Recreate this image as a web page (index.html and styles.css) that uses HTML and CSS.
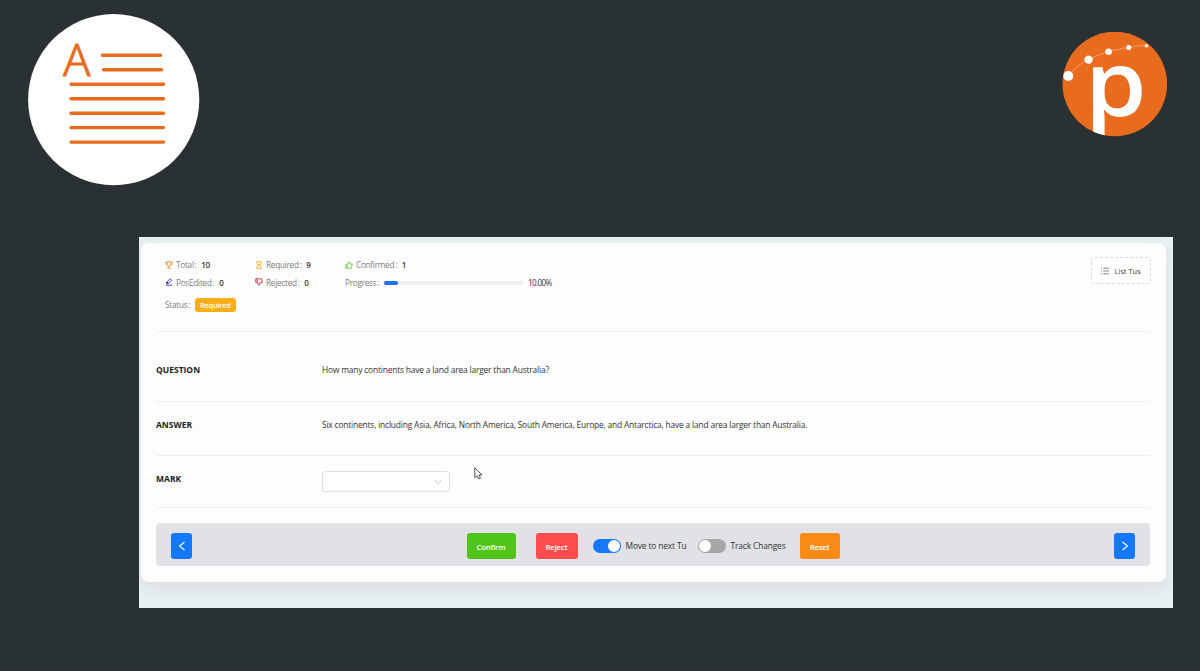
FILE: index.html
```html
<!DOCTYPE html>
<html lang="en">
<head>
    <meta charset="UTF-8">
    <title>Question Review</title>
    <link rel="stylesheet" href="styles.css">
</head>
<body>
    <!-- Top logos -->
    <header class="top">
        <svg class="doc-logo" width="172" height="172" viewBox="28 14 172 172">
            <circle cx="113.7" cy="99.6" r="85.6" fill="#fff"/>
            <text x="63.3" y="76.3" class="doc-letter">A</text>
            <g stroke="#e96c1e" stroke-width="3.4" stroke-linecap="round">
                <path d="M102.5 55.2H160.5M103.5 69.8H161.5M71 84.2H163.5M71 98.7H163.5M71 113.2H163.5M71 127.6H163.5M71 142.1H163.5"/>
            </g>
        </svg>
        <svg class="p-logo" width="106" height="105" viewBox="1062 32 106 105">
            <clipPath id="disc"><circle cx="1114.8" cy="84" r="52.3"/></clipPath>
            <circle cx="1114.8" cy="84" r="52.3" fill="#e96c1e"/>
            <g clip-path="url(#disc)">
                <text transform="translate(1085 116) scale(1.1 1)" class="p-letter">p</text>
            </g>
            <path d="M1068.3 76Q1077 65 1088.5 59.5T1108.5 51.6T1128.7 47.3T1146.5 45.7" fill="none" stroke="#f7b58c" stroke-width=".7"/>
            <g fill="#fff">
                <circle cx="1068.3" cy="76" r="5"/>
                <circle cx="1088.6" cy="59.6" r="4.2"/>
                <circle cx="1108.6" cy="51.7" r="3.3"/>
                <circle cx="1128.8" cy="47.4" r="2.5"/>
                <circle cx="1146.5" cy="45.8" r="1.8"/>
            </g>
        </svg>
    </header>

    <main class="screen">
        <div class="card">
            <!-- Summary -->
            <section class="summary">
                <div class="stats">
                    <div class="stat">
                        <svg class="icon orange" viewBox="0 0 16 16"><path d="M4 1.500h8v5a4 4 0 0 1-8 0zM4 3H1.500v2A2.500 2.500 0 0 0 4 7.500M12 3h2.500v2A2.500 2.500 0 0 1 12 7.500M8 10.500v3.500M4.500 14.500h7"/></svg>
                        <span class="name">Total<i>:</i></span><b>10</b>
                    </div>
                    <div class="stat">
                        <svg class="icon yellow" viewBox="0 0 16 16"><path d="M2.500 1.500h11M2.500 14.500h11M4 1.500v3a4 3.500 0 0 0 8 0v-3M4 14.500v-3a4 3.500 0 0 1 8 0v3"/></svg>
                        <span class="name">Required<i>:</i></span><b>9</b>
                    </div>
                    <div class="stat">
                        <svg class="icon green" viewBox="0 0 16 16"><path d="M1.500 7h3v7.500h-3zM4.500 7L7.500 1.500Q10 1.500 9.500 6H14.500L13 14.500H4.500"/></svg>
                        <span class="name">Confirmed<i>:</i></span><b>1</b>
                    </div>
                    <div class="stat">
                        <svg class="icon blue" viewBox="0 0 16 16"><path d="M1.500 14.500h13M3 11.500l.8-3.500L10.500 1.500l3 3L6.500 11z"/><path d="M3 11.500l.8-3.500 3 3z" fill="currentColor"/></svg>
                        <span class="name">PosEdited<i>:</i></span><b>0</b>
                    </div>
                    <div class="stat">
                        <svg class="icon red" viewBox="0 0 16 16"><path d="M1.500 1.500h3V9h-3zM4.500 1.500H13L14.500 9.500h-5Q10 14.500 7.500 14.500L4.500 9"/></svg>
                        <span class="name">Rejected<i>:</i></span><b>0</b>
                    </div>
                    <div class="stat">
                        <span class="name">Progress<i>:</i></span>
                        <span class="bar"><span class="bar-fill"></span></span>
                        <span class="percent">10.00%</span>
                    </div>
                    <div class="stat">
                        <span class="name">Status<i>:</i></span><span class="tag">Required</span>
                    </div>
                </div>
                <button class="list-button">
                    <svg width="8" height="8" viewBox="0 0 8 8"><path d="M2.300 1.200H8M2.300 4H8M2.300 6.800H8M0 1.200h1M0 4h1M0 6.800h1" stroke="#666" stroke-width=".8"/></svg>
                    <span>List Tus</span>
                </button>
            </section>

            <!-- Question and answer -->
            <section class="row question">
                <h2>QUESTION</h2>
                <p>How many continents have a land area larger than Australia?</p>
            </section>
            <section class="row answer">
                <h2>ANSWER</h2>
                <p>Six continents, including Asia, Africa, North America, South America, Europe, and Antarctica, have a land area larger than Australia.</p>
            </section>
            <section class="row mark">
                <h2>MARK</h2>
                <div class="select">
                    <svg width="8" height="6" viewBox="0 0 8 6"><path d="M.8 .8L4 4.800L7.200 .8" fill="none" stroke="#c4c4c4" stroke-width=".9"/></svg>
                </div>
            </section>

            <!-- Actions -->
            <section class="toolbar">
                <button class="btn nav"><svg width="8" height="10" viewBox="0 0 8 10"><path d="M6.500 1L1.500 5l5 4" fill="none" stroke="#fff" stroke-width="1.100"/></svg></button>
                <div class="actions">
                    <button class="btn confirm">Confirm</button>
                    <button class="btn reject">Reject</button>
                    <span class="switch on"></span>
                    <span class="switch-label next">Move to next Tu</span>
                    <span class="switch"></span>
                    <span class="switch-label track">Track Changes</span>
                    <button class="btn reset">Reset</button>
                </div>
                <button class="btn nav"><svg width="8" height="10" viewBox="0 0 8 10"><path d="M1.500 1l5 4-5 4" fill="none" stroke="#fff" stroke-width="1.100"/></svg></button>
            </section>
        </div>
    </main>

    <svg class="cursor" width="9" height="13" viewBox="0 0 9 13"><path d="M.8 .8V10.600L3.200 8.600L4.800 12L6.500 11.200L5 8H8z" fill="#fff" stroke="#444" stroke-width=".9"/></svg>
</body>
</html>
```

FILE: styles.css
```css
* {
    box-sizing: border-box;
}

body {
    margin: 0;
    height: 671px;
    overflow: hidden;
    background-color: #293133;
    font-family: "Open Sans", "Noto Sans", sans-serif;
    font-size: 8.4px;
    color: #333;
}

/* Top logos */
.top {
    display: flex;
    justify-content: space-between;
    height: 237px;
    padding: 14px 32px 0 28px;
}

.p-logo {
    margin-top: 18px;
}

.doc-letter {
    font-size: 45px;
    font-weight: 300;
    fill: #e96c1e;
    stroke: #e96c1e;
    stroke-width: 1.1px;
}

.p-letter {
    font-size: 90px;
    font-weight: 600;
    fill: #fff;
}

/* Application window */
.screen {
    width: 1034px;
    height: 371px;
    margin-left: 139px;
    padding: 6px 7px 0 2px;
    background-color: #e9f0f3;
    overflow: hidden;
}

.card {
    height: 339px;
    padding: 0 16px 0 15px;
    background-color: #fdfdfd;
    border-radius: 8px;
    box-shadow: 0 7px 16px rgba(60, 70, 75, 0.09);
}

.summary {
    display: flex;
    justify-content: space-between;
    height: 89px;
    padding: 14px 0 0 9px;
    border-bottom: 1px solid #f0f0f0;
}

.stats {
    display: grid;
    grid-template-columns: 90px 90px 220px;
    grid-template-rows: 17px 18px 26px;
    margin-top: -1px;
}

.stat {
    display: flex;
    align-items: center;
    white-space: nowrap;
}

.stat .icon {
    width: 8px;
    height: 8px;
    margin-right: 3px;
    fill: none;
    stroke: currentColor;
    stroke-width: 1.9;
}

.orange { color: #e9953c; }
.yellow { color: #e8bd35; }
.green { color: #70cf50; }
.blue { color: #4944b5; }
.red { color: #bd4148; }

.name {
    margin-right: 4.6px;
    font-size: 8.2px;
    letter-spacing: -0.25px;
    color: #7d7d7d;
}

.name i {
    margin-left: 1px;
    font-style: normal;
}

.stat b {
    font-size: 8px;
    font-weight: 600;
    letter-spacing: -0.2px;
    color: #333;
}

.bar {
    width: 139px;
    height: 4px;
    margin-top: 2px;
    border-radius: 2px;
    background-color: #efefef;
}

.bar-fill {
    display: block;
    width: 10%;
    height: 100%;
    border-radius: 2px;
    background-color: #1f70ec;
}

.percent {
    margin-left: 5px;
    font-size: 8.2px;
    letter-spacing: -0.65px;
}

.tag {
    width: 41px;
    height: 14px;
    margin-top: 2px;
    border-radius: 3px;
    background-color: #faad14;
    color: #fff;
    font-size: 7.5px;
    font-weight: 600;
    line-height: 15px;
    letter-spacing: -0.25px;
    text-align: center;
}

.list-button {
    display: flex;
    align-items: center;
    justify-content: center;
    gap: 5px;
    width: 60px;
    height: 27px;
    margin-right: -1px;
    background-color: #fff;
    border: 1px dashed #dadada;
    border-radius: 4px;
    font: inherit;
    font-size: 7.8px;
    letter-spacing: -0.15px;
    white-space: nowrap;
    color: #444;
}

/* Rows */
.row {
    display: flex;
    border-bottom: 1px solid #f0f0f0;
}

.row h2 {
    width: 166px;
    margin: 0;
    font-size: 8.5px;
    line-height: 12px;
    letter-spacing: 0;
    color: #222;
}

.row p {
    margin: 0;
    line-height: 12px;
    white-space: nowrap;
    letter-spacing: -0.168px;
}

.question {
    height: 70px;
    padding-top: 32px;
}

.answer {
    height: 54px;
    padding-top: 17px;
}

.mark {
    height: 52px;
    padding-top: 17px;
}

.select {
    display: flex;
    align-items: center;
    justify-content: flex-end;
    width: 128px;
    height: 21px;
    margin-top: -2px;
    padding-right: 7px;
    border: 1px solid #dfdfdf;
    border-radius: 3px;
    background-color: #fff;
}

/* Bottom toolbar */
.toolbar {
    display: flex;
    align-items: center;
    justify-content: space-between;
    height: 43px;
    margin-top: 15px;
    padding: 2px 15px 0;
    border-radius: 4px;
    background-color: #e1e2e6;
}

.actions {
    display: flex;
    align-items: center;
}

.btn {
    height: 26px;
    padding: 2px 0 0;
    border: none;
    border-radius: 3px;
    color: #fff;
    font: inherit;
    font-size: 7.8px;
    font-weight: 600;
    letter-spacing: -0.22px;
}

.nav {
    display: flex;
    align-items: center;
    justify-content: center;
    width: 21px;
    padding: 0;
    background-color: #1677ff;
}

.confirm {
    width: 49px;
    margin-right: 20px;
    background-color: #50c41a;
}

.reject {
    width: 42px;
    margin-right: 15px;
    background-color: #ff4d4f;
}

.reset {
    width: 40px;
    background-color: #fa8c16;
}

.switch {
    display: flex;
    width: 28px;
    height: 14px;
    padding: 1px;
    border-radius: 7px;
    background-color: #a6a6a7;
}

.switch::before {
    content: "";
    width: 12px;
    height: 12px;
    border-radius: 50%;
    background-color: #fff;
}

.switch.on {
    justify-content: flex-end;
    background-color: #1677ff;
}

.switch-label {
    margin-left: 5px;
    white-space: nowrap;
    letter-spacing: -0.13px;
}

.next {
    width: 72px;
}

.track {
    width: 69px;
}

.cursor {
    position: absolute;
    left: 474px;
    top: 467px;
}
```
